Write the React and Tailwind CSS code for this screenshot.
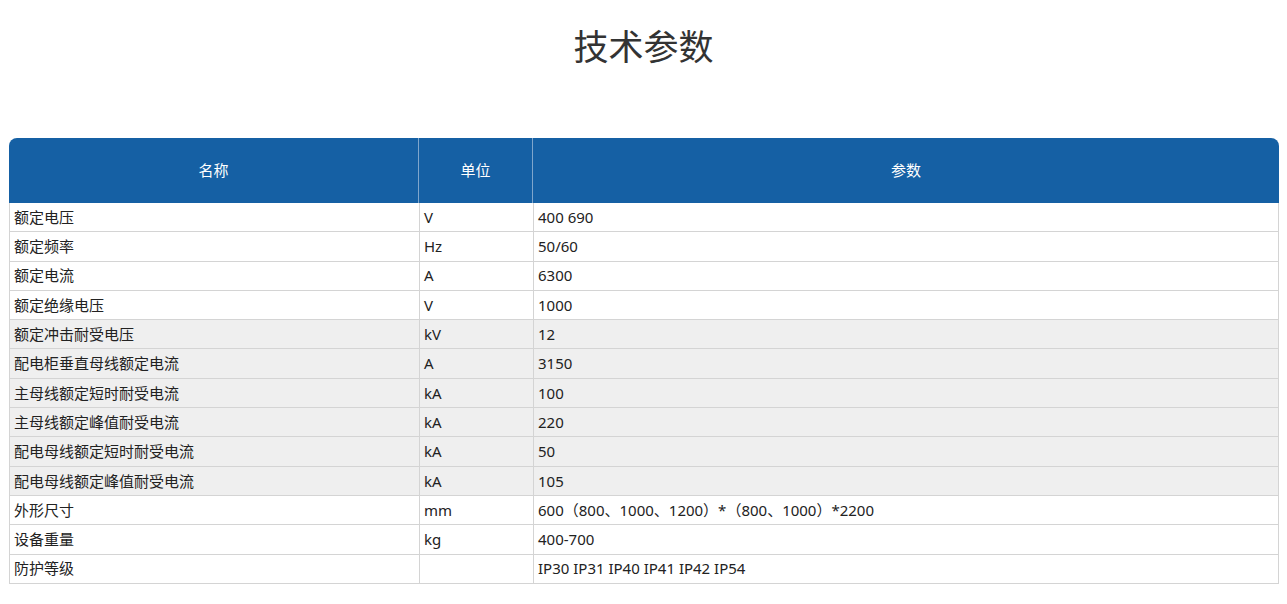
const rows=[["额定电压","V","400 690"],["额定频率","Hz","50/60"],["额定电流","A","6300"],["额定绝缘电压","V","1000"],["额定冲击耐受电压","kV","12",1],["配电柜垂直母线额定电流","A","3150",1],["主母线额定短时耐受电流","kA","100",1],["主母线额定峰值耐受电流","kA","220",1],["配电母线额定短时耐受电流","kA","50",1],["配电母线额定峰值耐受电流","kA","105",1],["外形尺寸","mm","600（800、1000、1200）*（800、1000）*2200"],["设备重量","kg","400-700"],["防护等级","","IP30 IP31 IP40 IP41 IP42 IP54"]];
export default function App(){return(<div className="bg-white w-[1287px] h-[604px]" style={{fontFamily:'"Noto Sans","Noto Sans CJK SC",sans-serif'}}>
<h1 className="text-center text-[35px] text-[#333] pt-[20px] h-[138px] leading-[50px]" style={{fontFamily:'"Noto Sans CJK SC",sans-serif'}}>技术参数</h1>
<div className="mx-[9px] w-[1270px] text-[15px] text-[#222]">
<div className="grid grid-cols-[410px_114px_1fr] h-[65px] bg-[#1560a4] text-white rounded-t-[8px] items-stretch">
{["名称","单位","参数"].map((t,i)=><div key={i} className={"flex items-center justify-center "+(i<2?"border-r border-[#7fa6cc]":"")}>{t}</div>)}
</div>
{rows.map((r,i)=><div key={i} className={"grid grid-cols-[410px_114px_1fr] h-[29.3px] border-b border-x border-[#d4d4d4] "+(r[3]?"bg-[#efefef]":"bg-white")}>
{[0,1,2].map(j=><div key={j} className={"flex items-center px-[4px] "+(j<2?"border-r border-[#d4d4d4]":"")}>{r[j]}</div>)}
</div>)}
</div></div>);}
